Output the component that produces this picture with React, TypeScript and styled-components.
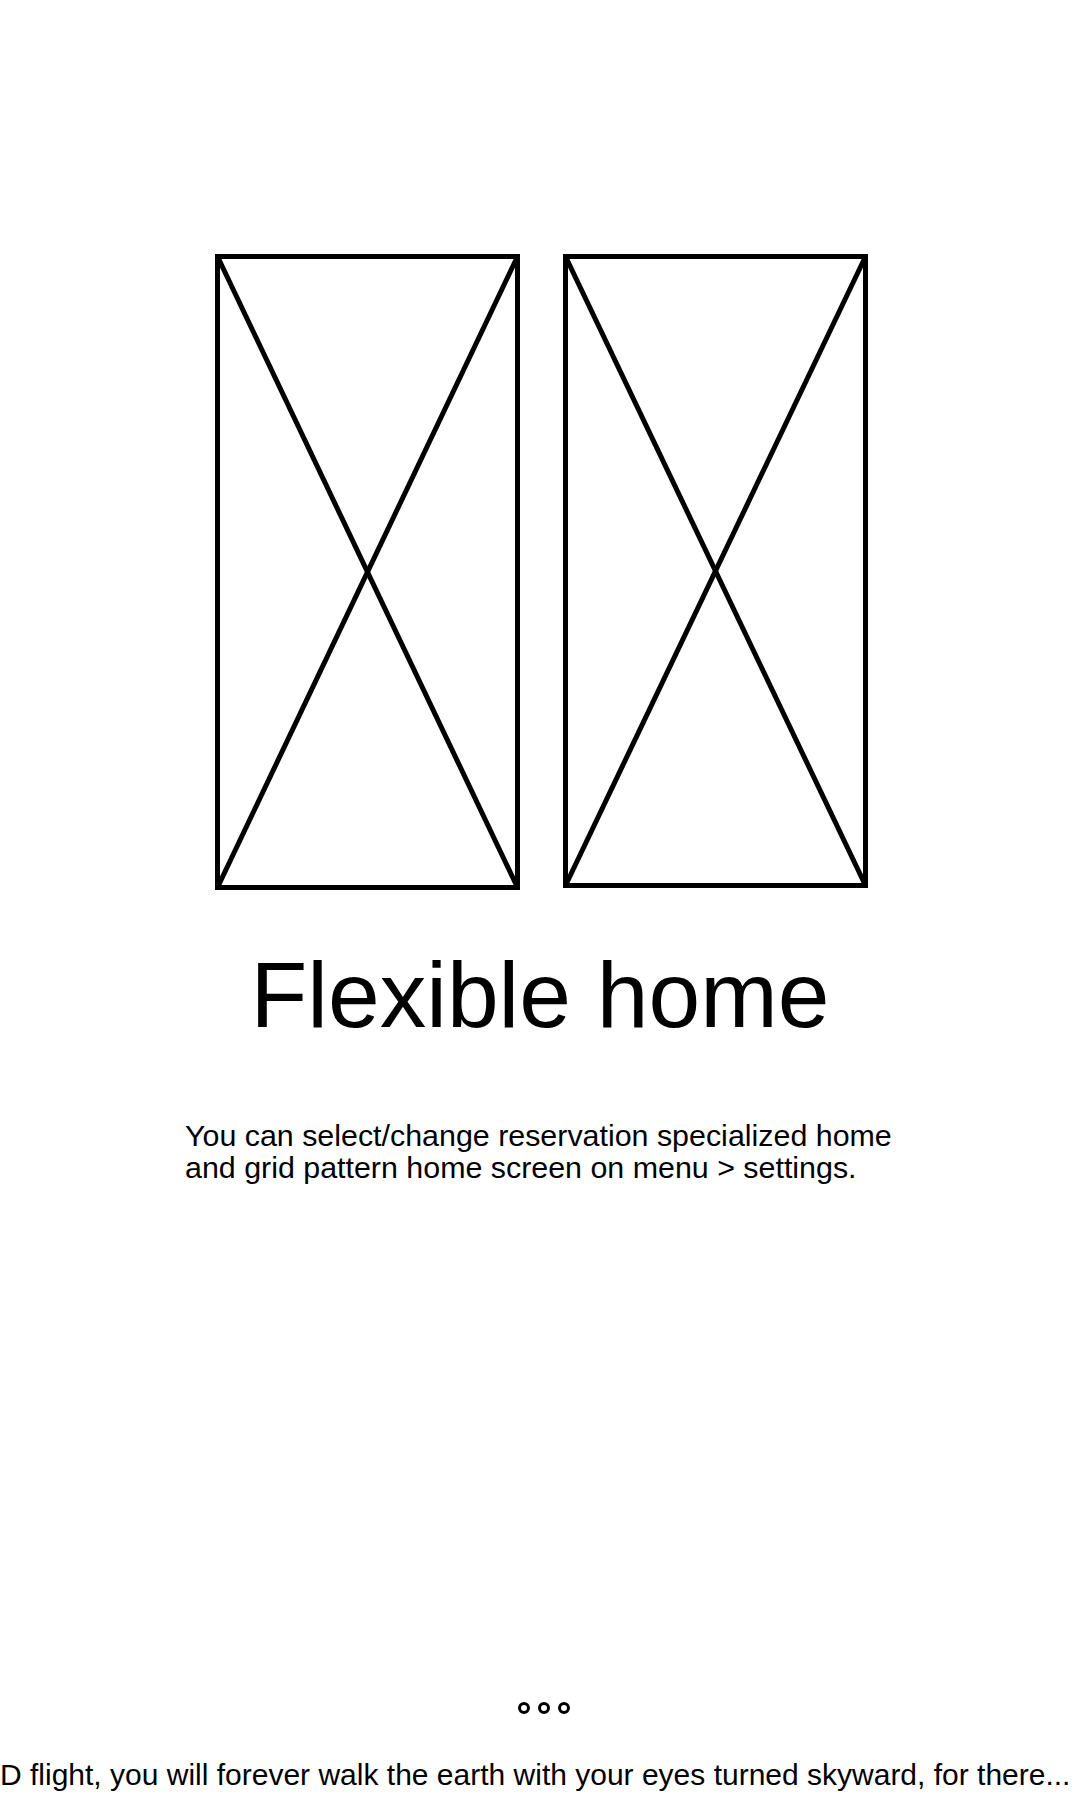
import React from "react"
import styled, { createGlobalStyle } from "styled-components"

const GlobalStyle = createGlobalStyle`
  html,
  body {
    margin: 0;
    padding: 0;
    background: #ffffff;
  }

  body {
    font-family: "Liberation Sans", Arial, sans-serif;
    color: #000000;
  }
`

const Page = styled.main`
  width: 1080px;
  height: 1800px;
  display: flex;
  flex-direction: column;
  align-items: center;
  overflow: hidden;
`

const ImageRow = styled.div`
  display: flex;
  gap: 43px;
  margin-top: 254px;
  margin-left: 3px;
`

const Title = styled.h1`
  margin: 59px 0 0 0;
  font-size: 93px;
  font-weight: 400;
  line-height: 93px;
  text-align: center;
`

const Description = styled.p`
  width: 710px;
  margin: 77px 0 0 0;
  font-size: 30.4px;
  line-height: 32px;
  text-align: left;
  white-space: nowrap;
`

const Indicator = styled.div`
  display: flex;
  gap: 8px;
  margin-top: auto;
  margin-left: 8px;
`

const Dot = styled.span<{ active?: boolean }>`
  width: 12px;
  height: 12px;
  box-sizing: border-box;
  border-radius: 50%;
  border: 3px solid #000000;
  background: ${props => (props.active ? "#000000" : "transparent")};
`

const Ticker = styled.div`
  align-self: stretch;
  margin: 43px 0 8px 0;
  font-size: 30px;
  line-height: 35px;
  white-space: nowrap;
  overflow: hidden;
`

interface PlaceholderProps {
  width: number
  height: number
}

function Placeholder({ width, height }: PlaceholderProps) {
  const s = 2.5
  return (
    <svg width={width} height={height} viewBox={`0 0 ${width} ${height}`}>
      <g stroke="#000" strokeWidth={5} fill="none">
        <rect x={s} y={s} width={width - s * 2} height={height - s * 2} />
        <line x1={s} y1={s} x2={width - s} y2={height - s} />
        <line x1={width - s} y1={s} x2={s} y2={height - s} />
      </g>
    </svg>
  )
}

export default function App() {
  return (
    <>
      <GlobalStyle />
      <Page>
        <ImageRow>
          <Placeholder width={305} height={636} />
          <Placeholder width={305} height={634} />
        </ImageRow>
        <Title>Flexible home</Title>
        <Description>
          You can select/change reservation specialized home
          <br />
          and grid pattern home screen on menu &gt; settings.
        </Description>
        <Indicator>
          <Dot />
          <Dot />
          <Dot />
        </Indicator>
        <Ticker>
          D flight, you will forever walk the earth with your eyes turned
          skyward, for there...
        </Ticker>
      </Page>
    </>
  )
}
